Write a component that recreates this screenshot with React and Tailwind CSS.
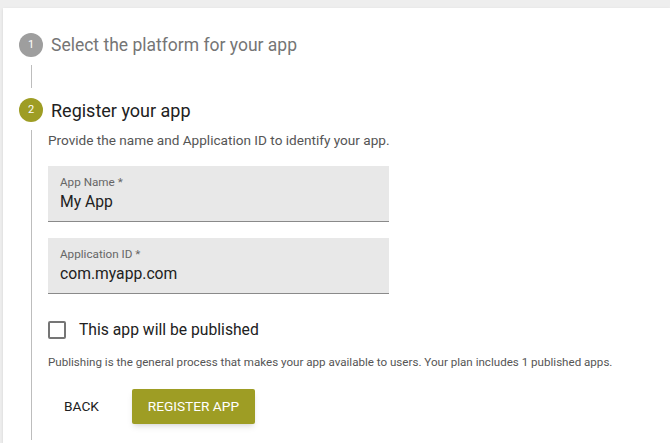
export default function App() {
  return (
    <div
      className="min-h-screen bg-[#eeeeee] pl-[3px] pt-[8px]"
      style={{ fontFamily: "Roboto, 'Liberation Sans', sans-serif" }}
    >
      <div className="min-h-[435px] bg-white pl-4 pt-[25px] shadow-sm">
        {/* step 1 */}
        <div className="flex h-6 items-center gap-2">
          <div className="flex h-6 w-6 items-center justify-center rounded-full bg-[#9e9e9e] text-[11px] text-white">
            1
          </div>
          <span className="text-[17.5px] text-[#757575]">Select the platform for your app</span>
        </div>
        <div className="ml-3 mt-2 mb-[10px] h-[23px] border-l border-[#bdbdbd]" />

        {/* step 2 */}
        <div className="flex h-6 items-center gap-2">
          <div className="flex h-6 w-6 items-center justify-center rounded-full bg-[#9e9d24] text-[11px] text-white">
            2
          </div>
          <span className="text-[18px] text-[#212121]">Register your app</span>
        </div>

        <div className="ml-3 mt-2 border-l border-[#bdbdbd] pl-4 pb-4">
          <p className="text-[13.6px] leading-5 text-[#555555]">
            Provide the name and Application ID to identify your app.
          </p>

          <div className="mt-4 h-14 w-[341px] border-b border-[#8a8a8a] bg-[#e8e8e8] px-3 pt-2">
            <div className="text-[11.7px] leading-4 text-[#666666]">App Name *</div>
            <div className="mt-0.5 text-[15.7px] leading-5 text-[#212121]">My App</div>
          </div>

          <div className="mt-4 h-14 w-[341px] border-b border-[#8a8a8a] bg-[#e8e8e8] px-3 pt-2">
            <div className="text-[11.7px] leading-4 text-[#666666]">Application ID *</div>
            <div className="mt-0.5 text-[15.7px] leading-5 text-[#212121]">com.myapp.com</div>
          </div>

          <label className="mt-6 flex h-6 items-center gap-[13px]">
            <span className="block h-[18px] w-[18px] rounded-[2px] border-2 border-[#757575]" />
            <span className="text-[15.7px] text-[#212121]">This app will be published</span>
          </label>

          <p className="mt-3 text-[11.6px] leading-4 text-[#555555]">
            Publishing is the general process that makes your app available to users. Your plan includes 1 published apps.
          </p>

          <div className="mt-[19px] flex items-center gap-4">
            <button className="h-[35px] px-4 text-[13.7px] uppercase text-[#212121]">Back</button>
            <button className="ml-px h-[35px] w-[123px] rounded-[2px] bg-[#9e9d24] text-[13.7px] uppercase text-white shadow-md">
              Register App
            </button>
          </div>
        </div>
      </div>
    </div>
  );
}
